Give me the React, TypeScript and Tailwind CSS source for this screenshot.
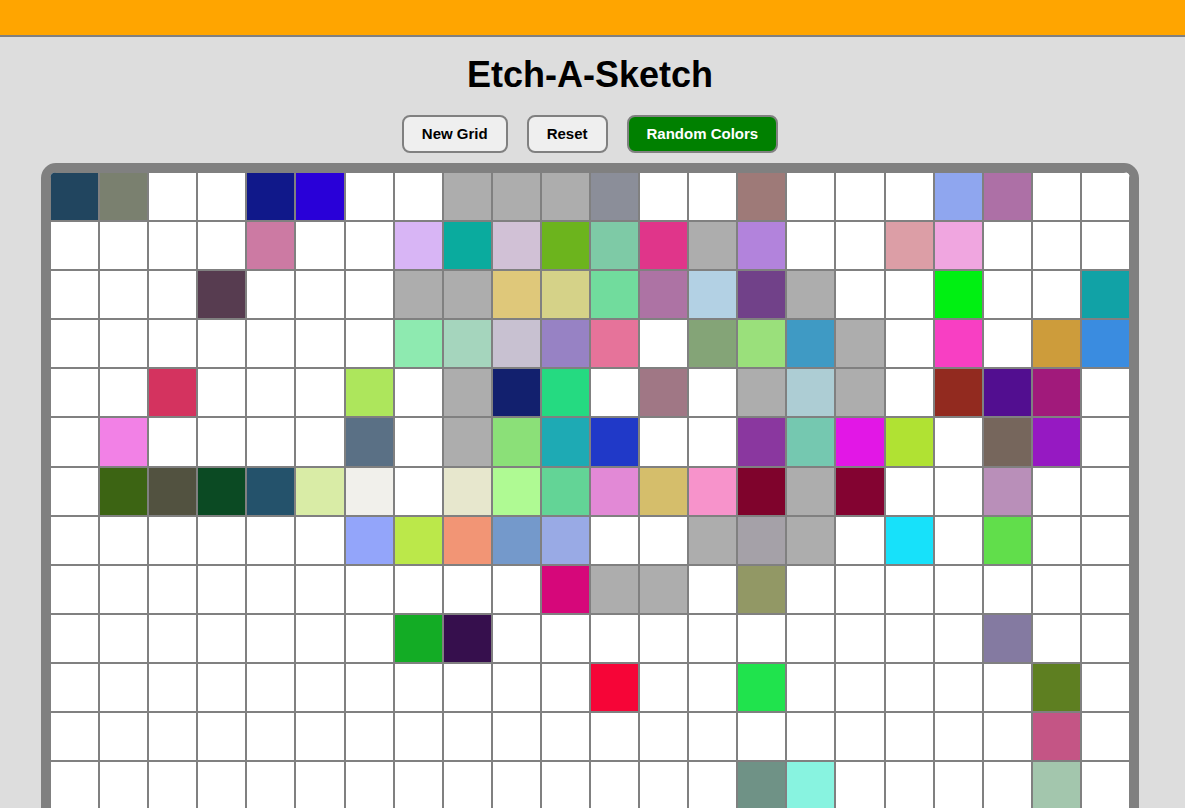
import React from "react";

const G = "#adadad";
const W = "";

const rows: string[][] = [
  ["#21455f", "#7a806f", W, W, "#10188a", "#2900d8", W, W, G, G, G, "#8b8e99", W, W, "#9e7a78", W, W, W, "#8fa6ef", "#ad70a6", W, W],
  [W, W, W, W, "#cc7aa3", W, W, "#d8b5f5", "#0aab9e", "#d1c1d6", "#6cb41d", "#7ecaa6", "#e0358a", G, "#b283dc", W, W, "#dc9ea6", "#f0a6e0", W, W, W],
  [W, W, W, "#573c50", W, W, W, G, G, "#dfc87a", "#d5d288", "#71dc9d", "#ad73a4", "#b3d1e4", "#714189", G, W, W, "#00f012", W, W, "#11a2a6"],
  [W, W, W, W, W, W, W, "#8eeab0", "#a5d5bd", "#c8c1d1", "#9782c4", "#e6739a", W, "#84a477", "#9ae07b", "#3f9ac4", G, W, "#f83fc3", W, "#cd9c3b", "#3a8ce0"],
  [W, W, "#d4335f", W, W, W, "#ade65c", W, G, "#12206e", "#25da81", W, "#a07785", W, G, "#adcdd4", G, W, "#922a1f", "#520e90", "#a11a7b", W],
  [W, "#f281e6", W, W, W, W, "#5a7085", W, G, "#8be078", "#1eaab4", "#2039c8", W, W, "#8a379f", "#75c8b0", "#e217e6", "#b0e233", W, "#76665c", "#9619c2", W],
  [W, "#3c6413", "#525240", "#0b4a23", "#24526b", "#d9eca6", "#f1f0eb", W, "#e7e7cd", "#affa93", "#63d496", "#e289d6", "#d5be6b", "#f793cb", "#7f032c", G, "#830331", W, W, "#b98fb9", W, W],
  [W, W, W, W, W, W, "#93a5fa", "#bbe84a", "#f29575", "#7499cb", "#99aae5", W, W, G, "#a5a1a8", G, W, "#17e1fa", W, "#61de4b", W, W],
  [W, W, W, W, W, W, W, W, W, W, "#d6077a", G, G, W, "#929865", W, W, W, W, W, W, W],
  [W, W, W, W, W, W, W, "#13ac25", "#360f4d", W, W, W, W, W, W, W, W, W, W, "#847aa1", W, W],
  [W, W, W, W, W, W, W, W, W, W, W, "#f60537", W, W, "#20e34d", W, W, W, W, W, "#5e7f21", W],
  [W, W, W, W, W, W, W, W, W, W, W, W, W, W, W, W, W, W, W, W, "#c45585", W],
  [W, W, W, W, W, W, W, W, W, W, W, W, W, W, "#6f9286", "#88f3e0", W, W, W, W, "#a3c6ad", W],
];

const allRows: string[][] = [...rows];
while (allRows.length < 22) allRows.push(Array(22).fill(W));

export default function App() {
  return (
    <div className="min-h-screen bg-[#dddddd] font-['Liberation_Sans',Arial,sans-serif] text-black">
      <div className="h-[35px] bg-[#ffa500] border-b-2 border-[#808080] box-content" />
      <div className="w-[1180px] flex flex-col items-center">
        <h1 className="mt-[17px] text-[36px] leading-[41px] font-bold">Etch-A-Sketch</h1>
        <div className="mt-[20px] flex gap-[19px]">
          <button className="h-[38px] px-[18px] border-2 border-[#808080] rounded-[8px] bg-[#efefef] text-[15px] font-bold text-black">
            New Grid
          </button>
          <button className="h-[38px] px-[18px] border-2 border-[#808080] rounded-[8px] bg-[#efefef] text-[15px] font-bold text-black">
            Reset
          </button>
          <button className="h-[38px] px-[18px] border-2 border-[#808080] rounded-[8px] bg-[#008000] text-[15px] font-bold text-white">
            Random Colors
          </button>
        </div>
        <div className="mt-[10px] w-[1098px] border-[9px] border-[#808080] rounded-[15px] overflow-hidden bg-white">
          <div className="grid grid-cols-[repeat(22,minmax(0,1fr))]">
            {allRows.map((r, ri) =>
              r.map((c, ci) => (
                <div
                  key={`${ri}-${ci}`}
                  className="aspect-square border border-[#808080]"
                  style={{ backgroundColor: c || "#ffffff" }}
                />
              ))
            )}
          </div>
        </div>
      </div>
    </div>
  );
}
